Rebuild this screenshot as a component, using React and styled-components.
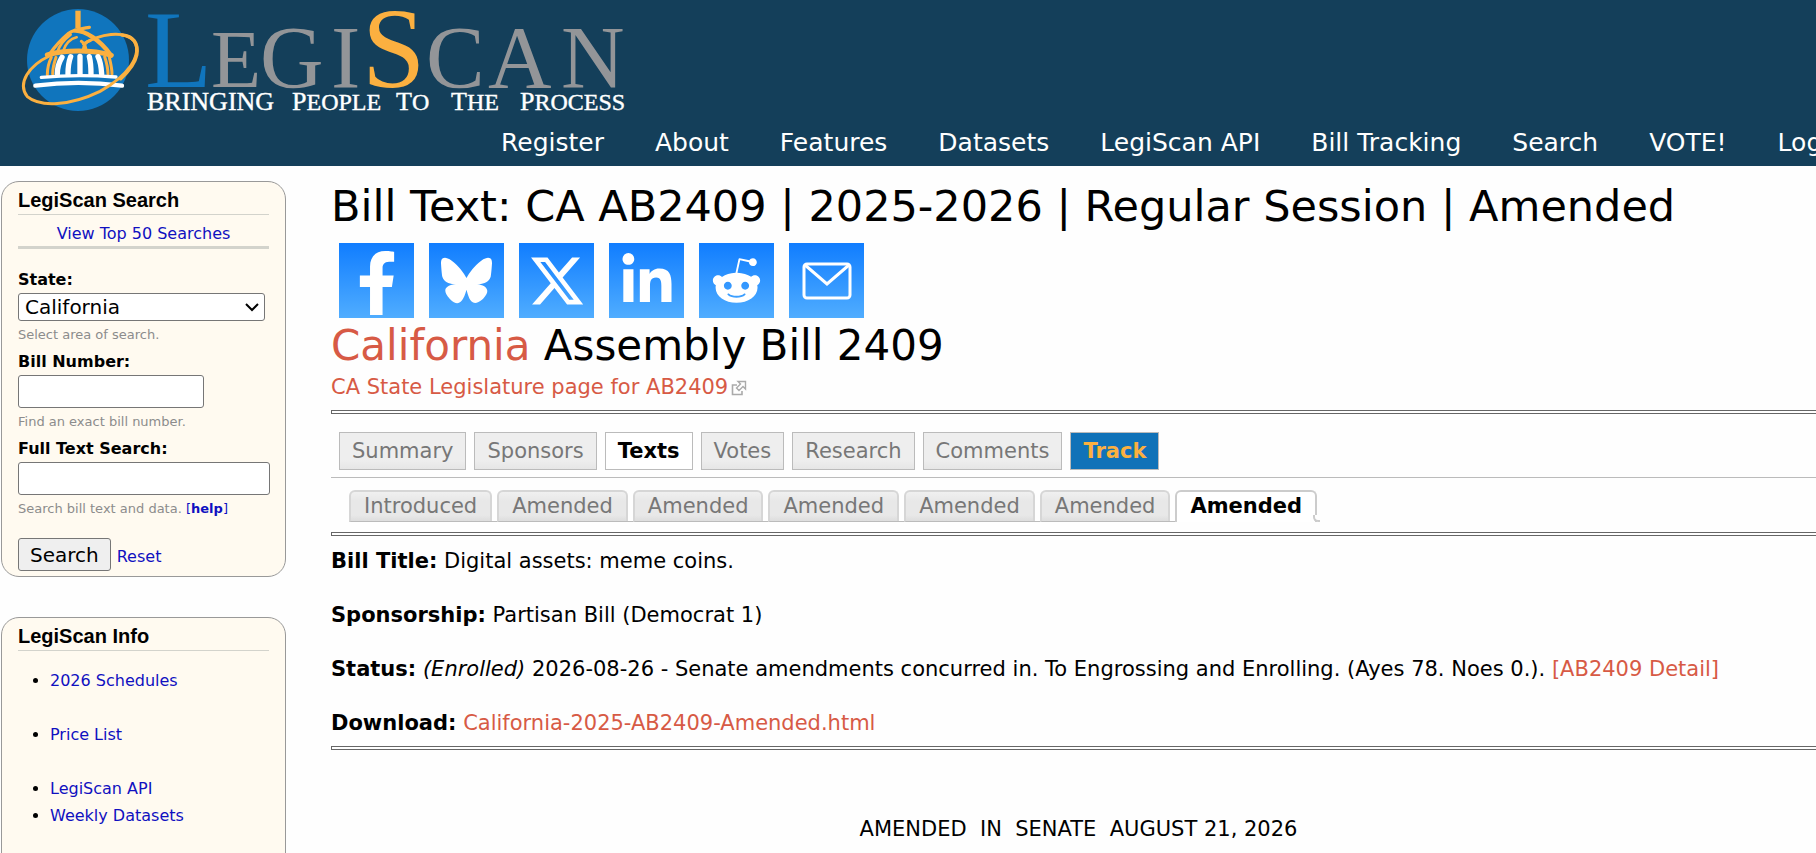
import React, { useState } from "react";
import styled, { createGlobalStyle, css } from "styled-components";
import { FaFacebookF, FaLinkedinIn, FaRedditAlien } from "react-icons/fa";
import { FaBluesky, FaXTwitter } from "react-icons/fa6";

const navLinks = [
  "Register",
  "About",
  "Features",
  "Datasets",
  "LegiScan API",
  "Bill Tracking",
  "Search",
  "VOTE!",
  "Login",
];

const tabs = ["Summary", "Sponsors", "Texts", "Votes", "Research", "Comments", "Track"];

const versions = ["Introduced", "Amended", "Amended", "Amended", "Amended", "Amended", "Amended"];

const infoLinks = [["2026 Schedules"], ["Price List"], ["LegiScan API", "Weekly Datasets"]];

const Logo = () => (
  <svg width="640" height="116" viewBox="0 0 640 116" role="img" aria-label="LegiScan">
    <circle cx="78" cy="60" r="51" fill="#1075bd" />
    <g transform="scale(0.3333)" fill="none" strokeLinecap="round">
      {/* dome */}
      <g stroke="#fbb040">
        <path d="M234 32V84" strokeWidth="16" strokeLinecap="butt" />
        <path d="M268 82C245 86 222 88 206 100C180 122 160 146 148 164" strokeWidth="10" />
        <path d="M226 92C256 92 300 120 330 162" strokeWidth="13" />
        <path d="M230 112C206 118 196 134 190 152M212 104C188 122 178 138 172 156" strokeWidth="8" />
        <path d="M244 124C254 130 258 142 258 156M270 122C256 124 252 134 250 150" strokeWidth="9" />
        <path d="M142 165C190 150 275 148 334 166" strokeWidth="15" />
        <path d="M154 172C146 188 142 204 142 224M168 172C162 190 158 204 158 222" strokeWidth="9" />
        <path d="M314 170C320 188 324 204 324 222M328 172C332 190 336 204 336 222" strokeWidth="9" />
      </g>
      <g stroke="#ffffff">
        <path
          d="M186 172C176 188 172 206 172 222M212 170C206 186 204 204 204 222M240 169V222M268 170C272 186 273 204 273 222M294 170C302 186 304 204 305 222"
          strokeWidth="16"
        />
        <path d="M124 232C190 226 280 226 348 231" strokeWidth="10" />
        <path d="M106 257C190 246 280 246 366 257" strokeWidth="13" />
      </g>
      {/* orbit */}
      <path
        d="M250 132C300 102 370 90 402 122C430 166 380 230 300 274C210 318 120 322 82 290C50 250 88 196 148 168"
        stroke="#fbb040"
        strokeWidth="9"
      />
      <path d="M366 105C400 108 416 130 410 165C404 195 384 216 362 236" stroke="#fbb040" strokeWidth="11" />
    </g>
    <g fontFamily="'Liberation Serif', serif">
      <g fontSize="88" fill="#939598">
        <text x="145" y="87" fontSize="110" fill="#1075bd">L</text>
        <text x="211" y="87" fontSize="82">E</text>
        <text x="260" y="87">G</text>
        <text x="331" y="87">I</text>
        <text x="362" y="87" fontSize="114" fill="#fbb040">S</text>
        <text x="426" y="87">C</text>
        <text x="488" y="87">A</text>
        <text x="561" y="87">N</text>
      </g>
      <g fontSize="24" fill="#ffffff" stroke="#ffffff" strokeWidth="0.4">
        <text x="147" y="110" fontSize="26">BRINGING</text>
        <text x="292" y="110"><tspan fontSize="26">P</tspan>EOPLE</text>
        <text x="396" y="110"><tspan fontSize="26">T</tspan>O</text>
        <text x="451" y="110"><tspan fontSize="26">T</tspan>HE</text>
        <text x="520" y="110"><tspan fontSize="26">P</tspan>ROCESS</text>
      </g>
    </g>
  </svg>
);

const MailIcon = () => (
  <svg width="50" height="38" viewBox="0 0 50 38" fill="none" stroke="#fff" strokeWidth="3">
    <rect x="2" y="2" width="46" height="34" rx="3" />
    <path d="M3 3L25 22L47 3" />
  </svg>
);

const ExternalIcon = () => (
  <svg width="16" height="16" viewBox="0 0 16 16" fill="none" stroke="#aaa">
    <path d="M6 5H1.5V14.5H11V11" strokeWidth="1.6" />
    <path d="M7 1.5H14.5V9L12 6.500L8 10.500L5.500 8L9.500 4Z" strokeWidth="1.4" />
  </svg>
);

const ChevronIcon = () => (
  <svg width="14" height="9" viewBox="0 0 14 9" fill="none" stroke="#000" strokeWidth="2">
    <path d="M1 1L7 7L13 1" />
  </svg>
);

const shareLinks = [
  { name: "Facebook", icon: <FaFacebookF size={64} /> },
  { name: "Bluesky", icon: <FaBluesky size={51} /> },
  { name: "X", icon: <FaXTwitter size={58} /> },
  { name: "LinkedIn", icon: <FaLinkedinIn size={56} /> },
  { name: "Reddit", icon: <FaRedditAlien size={51} /> },
  { name: "Email", icon: <MailIcon /> },
];

const SearchPanel = () => {
  const [state, setState] = useState("California");
  const [bill, setBill] = useState("");
  const [query, setQuery] = useState("");

  const handleReset = (e) => {
    e.preventDefault();
    setState("California");
    setBill("");
    setQuery("");
  };

  return (
    <Panel>
      <PanelTitle>LegiScan Search</PanelTitle>
      <TopSearches>
        <SideLink href="#top">View Top 50 Searches</SideLink>
      </TopSearches>
      <form onSubmit={(e) => e.preventDefault()}>
        <Field>
          <label htmlFor="state">State:</label>
          <SelectBox>
            <Select id="state" value={state} onChange={(e) => setState(e.target.value)}>
              <option>California</option>
              <option>US Congress</option>
            </Select>
            <ChevronIcon />
          </SelectBox>
          <Hint>Select area of search.</Hint>
        </Field>
        <Field>
          <label htmlFor="bill">Bill Number:</label>
          <TextInput id="bill" $short value={bill} onChange={(e) => setBill(e.target.value)} />
          <Hint>Find an exact bill number.</Hint>
        </Field>
        <Field>
          <label htmlFor="query">Full Text Search:</label>
          <TextInput id="query" value={query} onChange={(e) => setQuery(e.target.value)} />
          <Hint>
            Search bill text and data.{" "}
            <SideLink href="#help">
              [<b>help</b>]
            </SideLink>
          </Hint>
        </Field>
        <Actions>
          <SearchButton type="submit">Search</SearchButton>
          <SideLink href="#reset" onClick={handleReset}>
            Reset
          </SideLink>
        </Actions>
      </form>
    </Panel>
  );
};

const App = () => {
  return (
    <>
      <GlobalStyle />
      <Header>
        <Logo />
        <Nav>
          {navLinks.map((link) => (
            <a key={link} href="#nav">
              {link}
            </a>
          ))}
        </Nav>
      </Header>
      <Page>
        <Sidebar>
          <SearchPanel />
          <Panel $tall>
            <PanelTitle>LegiScan Info</PanelTitle>
            <InfoLists>
              {infoLinks.map((group) => (
                <ul key={group[0]}>
                  {group.map((link) => (
                    <li key={link}>
                      <SideLink href="#info">{link}</SideLink>
                    </li>
                  ))}
                </ul>
              ))}
            </InfoLists>
          </Panel>
        </Sidebar>
        <Main>
          <Title>Bill Text: CA AB2409 | 2025-2026 | Regular Session | Amended</Title>
          <ShareRow>
            {shareLinks.map(({ name, icon }) => (
              <ShareLink key={name} href="#share" aria-label={name} $low={name === "Facebook"}>
                {icon}
              </ShareLink>
            ))}
          </ShareRow>
          <BillName>
            <BillLink href="#state">California</BillLink> Assembly Bill 2409
          </BillName>
          <Source>
            <BillLink href="#source">CA State Legislature page for AB2409</BillLink>
            <ExternalIcon />
          </Source>
          <Rule />
          <Tabs>
            {tabs.map((tab) => (
              <Tab key={tab} href="#tab" $active={tab === "Texts"} $track={tab === "Track"}>
                {tab}
              </Tab>
            ))}
          </Tabs>
          <VersionBar>
            {versions.map((version, i) => (
              <Version key={i} href="#version" $active={i === versions.length - 1}>
                {version}
              </Version>
            ))}
          </VersionBar>
          <Rule />
          <Details>
            <p>
              <b>Bill Title:</b> Digital assets: meme coins.
            </p>
            <p>
              <b>Sponsorship:</b> Partisan Bill (Democrat 1)
            </p>
            <p>
              <b>Status:</b> <i>(Enrolled)</i> 2026-08-26 - Senate amendments concurred in. To
              Engrossing and Enrolling. (Ayes 78. Noes 0.).{" "}
              <BillLink href="#detail">[AB2409 Detail]</BillLink>
            </p>
            <p>
              <b>Download:</b>{" "}
              <BillLink href="#download">California-2025-AB2409-Amended.html</BillLink>
            </p>
          </Details>
          <Rule />
          <BillText>AMENDED&nbsp; IN&nbsp; SENATE&nbsp; AUGUST 21, 2026</BillText>
        </Main>
      </Page>
    </>
  );
};

const GlobalStyle = createGlobalStyle`
  * {
    box-sizing: border-box;
  }
  body {
    margin: 0;
    background: #fefefe;
    color: #000;
    font-family: "DejaVu Sans", Verdana, sans-serif;
    font-size: 21px;
    line-height: 27px;
  }
  a {
    text-decoration: none;
  }
`;

const Header = styled.header`
  background: #143f5a;
  overflow: hidden;
  svg {
    display: block;
    overflow: visible;
  }
`;

const Nav = styled.nav`
  display: flex;
  gap: 51px;
  padding: 12px 0 8px 501px;
  font-size: 25px;
  line-height: 30px;
  white-space: nowrap;
  a {
    color: #fff;
  }
`;

const Page = styled.div`
  display: grid;
  grid-template-columns: 286px minmax(0, 1fr);
  column-gap: 45px;
  align-items: start;
  padding-top: 15px;
`;

const Sidebar = styled.aside`
  display: flex;
  flex-direction: column;
  gap: 40px;
  padding-left: 1px;
  font-size: 16px;
  line-height: 20px;
`;

const Panel = styled.section`
  padding: 5px 16px;
  border: 1px solid #999;
  border-radius: 18px;
  background: #fffaf0;
  ${({ $tall }) => $tall && "padding-bottom: 54px;"}
`;

const PanelTitle = styled.h2`
  margin: 0;
  padding-bottom: 1px;
  border-bottom: 1px solid #d3d3cc;
  font: bold 20px/26px "Liberation Sans", Arial, sans-serif;
`;

const TopSearches = styled.div`
  margin: 9px 0 21px;
  padding-bottom: 2px;
  border-bottom: 3px solid #d3d3cc;
  text-align: center;
`;

const SideLink = styled.a`
  color: #1010c0;
`;

const Field = styled.div`
  display: flex;
  flex-direction: column;
  gap: 3px;
  margin-bottom: 7px;
  label {
    font-weight: bold;
  }
`;

const control = css`
  border: 1px solid #767676;
  border-radius: 3px;
  background-color: #fff;
  color: #000;
  font-family: inherit;
  font-size: 20px;
`;

const SelectBox = styled.div`
  position: relative;
  width: 247px;
  svg {
    position: absolute;
    top: 10px;
    right: 6px;
    pointer-events: none;
  }
`;

const Select = styled.select`
  ${control}
  display: block;
  appearance: none;
  width: 100%;
  height: 28px;
  padding: 0 6px;
`;

const TextInput = styled.input`
  ${control}
  width: ${({ $short }) => ($short ? "186px" : "252px")};
  height: 33px;
`;

const Hint = styled.span`
  padding-top: 1px;
  color: #8c8c8c;
  font-size: 13px;
`;

const Actions = styled.div`
  display: flex;
  align-items: baseline;
  gap: 6px;
  margin-top: 19px;
`;

const SearchButton = styled.button`
  ${control}
  height: 33px;
  padding: 0 11px;
  background-color: #efefef;
`;

const InfoLists = styled.nav`
  display: flex;
  flex-direction: column;
  gap: 27px;
  padding-top: 16px;
  line-height: 27px;
  ul {
    margin: 0;
    padding-left: 32px;
  }
`;

const Main = styled.main`
  min-width: 0;
`;

const Title = styled.h1`
  margin: 0;
  font-size: 43px;
  font-weight: normal;
  line-height: 50px;
  white-space: nowrap;
`;

const ShareRow = styled.div`
  display: flex;
  gap: 15px;
  padding: 12px 8px 3px;
`;

const ShareLink = styled.a`
  display: flex;
  align-items: center;
  justify-content: center;
  width: 75px;
  height: 75px;
  padding-top: ${({ $low }) => ($low ? "5px" : "0")};
  background: linear-gradient(#107dff, #50adff);
  color: #fff;
`;

const BillName = styled.h2`
  margin: 0 0 3px;
  font-size: 42px;
  font-weight: normal;
  line-height: 50px;
`;

const BillLink = styled.a`
  color: #d75a45;
`;

const Source = styled.div`
  display: flex;
  align-items: center;
  gap: 3px;
`;

const Rule = styled.hr`
  height: 4px;
  margin: 9px 0;
  border: 1px solid #666;
  border-right: 0;
`;

const Tabs = styled.nav`
  display: flex;
  gap: 8px;
  padding: 9px 8px 7px;
  border-bottom: 1px solid #bbb;
`;

const Tab = styled.a`
  padding: 0 12px;
  border: 1px solid #bbb;
  background: linear-gradient(#eee 75%, #e6e6e6);
  color: #777;
  line-height: 36px;
  ${({ $active }) =>
    $active &&
    css`
      background: #fff;
      color: #000;
      font-weight: bold;
    `}
  ${({ $track }) =>
    $track &&
    css`
      background: #1072b8;
      color: #fbb040;
      font-weight: bold;
    `}
`;

const VersionBar = styled.nav`
  display: flex;
  margin: 12px 15px 10px;
`;

const Version = styled.a`
  position: relative;
  padding: 0 13px;
  margin-right: 5px;
  border: 2px solid #d6d6d6;
  border-bottom: 1px solid #bbb;
  border-radius: 6px 6px 0 0;
  background: linear-gradient(#f0f0f0, #e8e8e8 30%, #e8e8e8 80%, #ddd);
  color: #777;
  line-height: 29px;
  &:first-child {
    margin-left: 3px;
  }
  /* baseline running between the version tabs */
  &::before {
    content: "";
    position: absolute;
    right: -7px;
    bottom: -1px;
    width: 7px;
    border-bottom: 1px solid #bbb;
  }
  ${({ $active }) =>
    $active &&
    css`
      border-color: #ccc;
      border-bottom: 0;
      background: #fff;
      color: #000;
      font-weight: bold;
      &::before {
        right: -5px;
        bottom: 0;
        width: 5px;
        height: 5px;
        border: 0;
        border-left: 2px solid #ccc;
        border-bottom: 2px solid #ccc;
        border-bottom-left-radius: 5px;
        background: #fefefe;
      }
    `}
`;

const Details = styled.div`
  padding-top: 3px;
  p {
    margin: 0 0 27px;
  }
  p:last-child {
    margin: 0;
  }
`;

const BillText = styled.div`
  padding: 57px 0 10px 10px;
  text-align: center;
`;

export default App;
